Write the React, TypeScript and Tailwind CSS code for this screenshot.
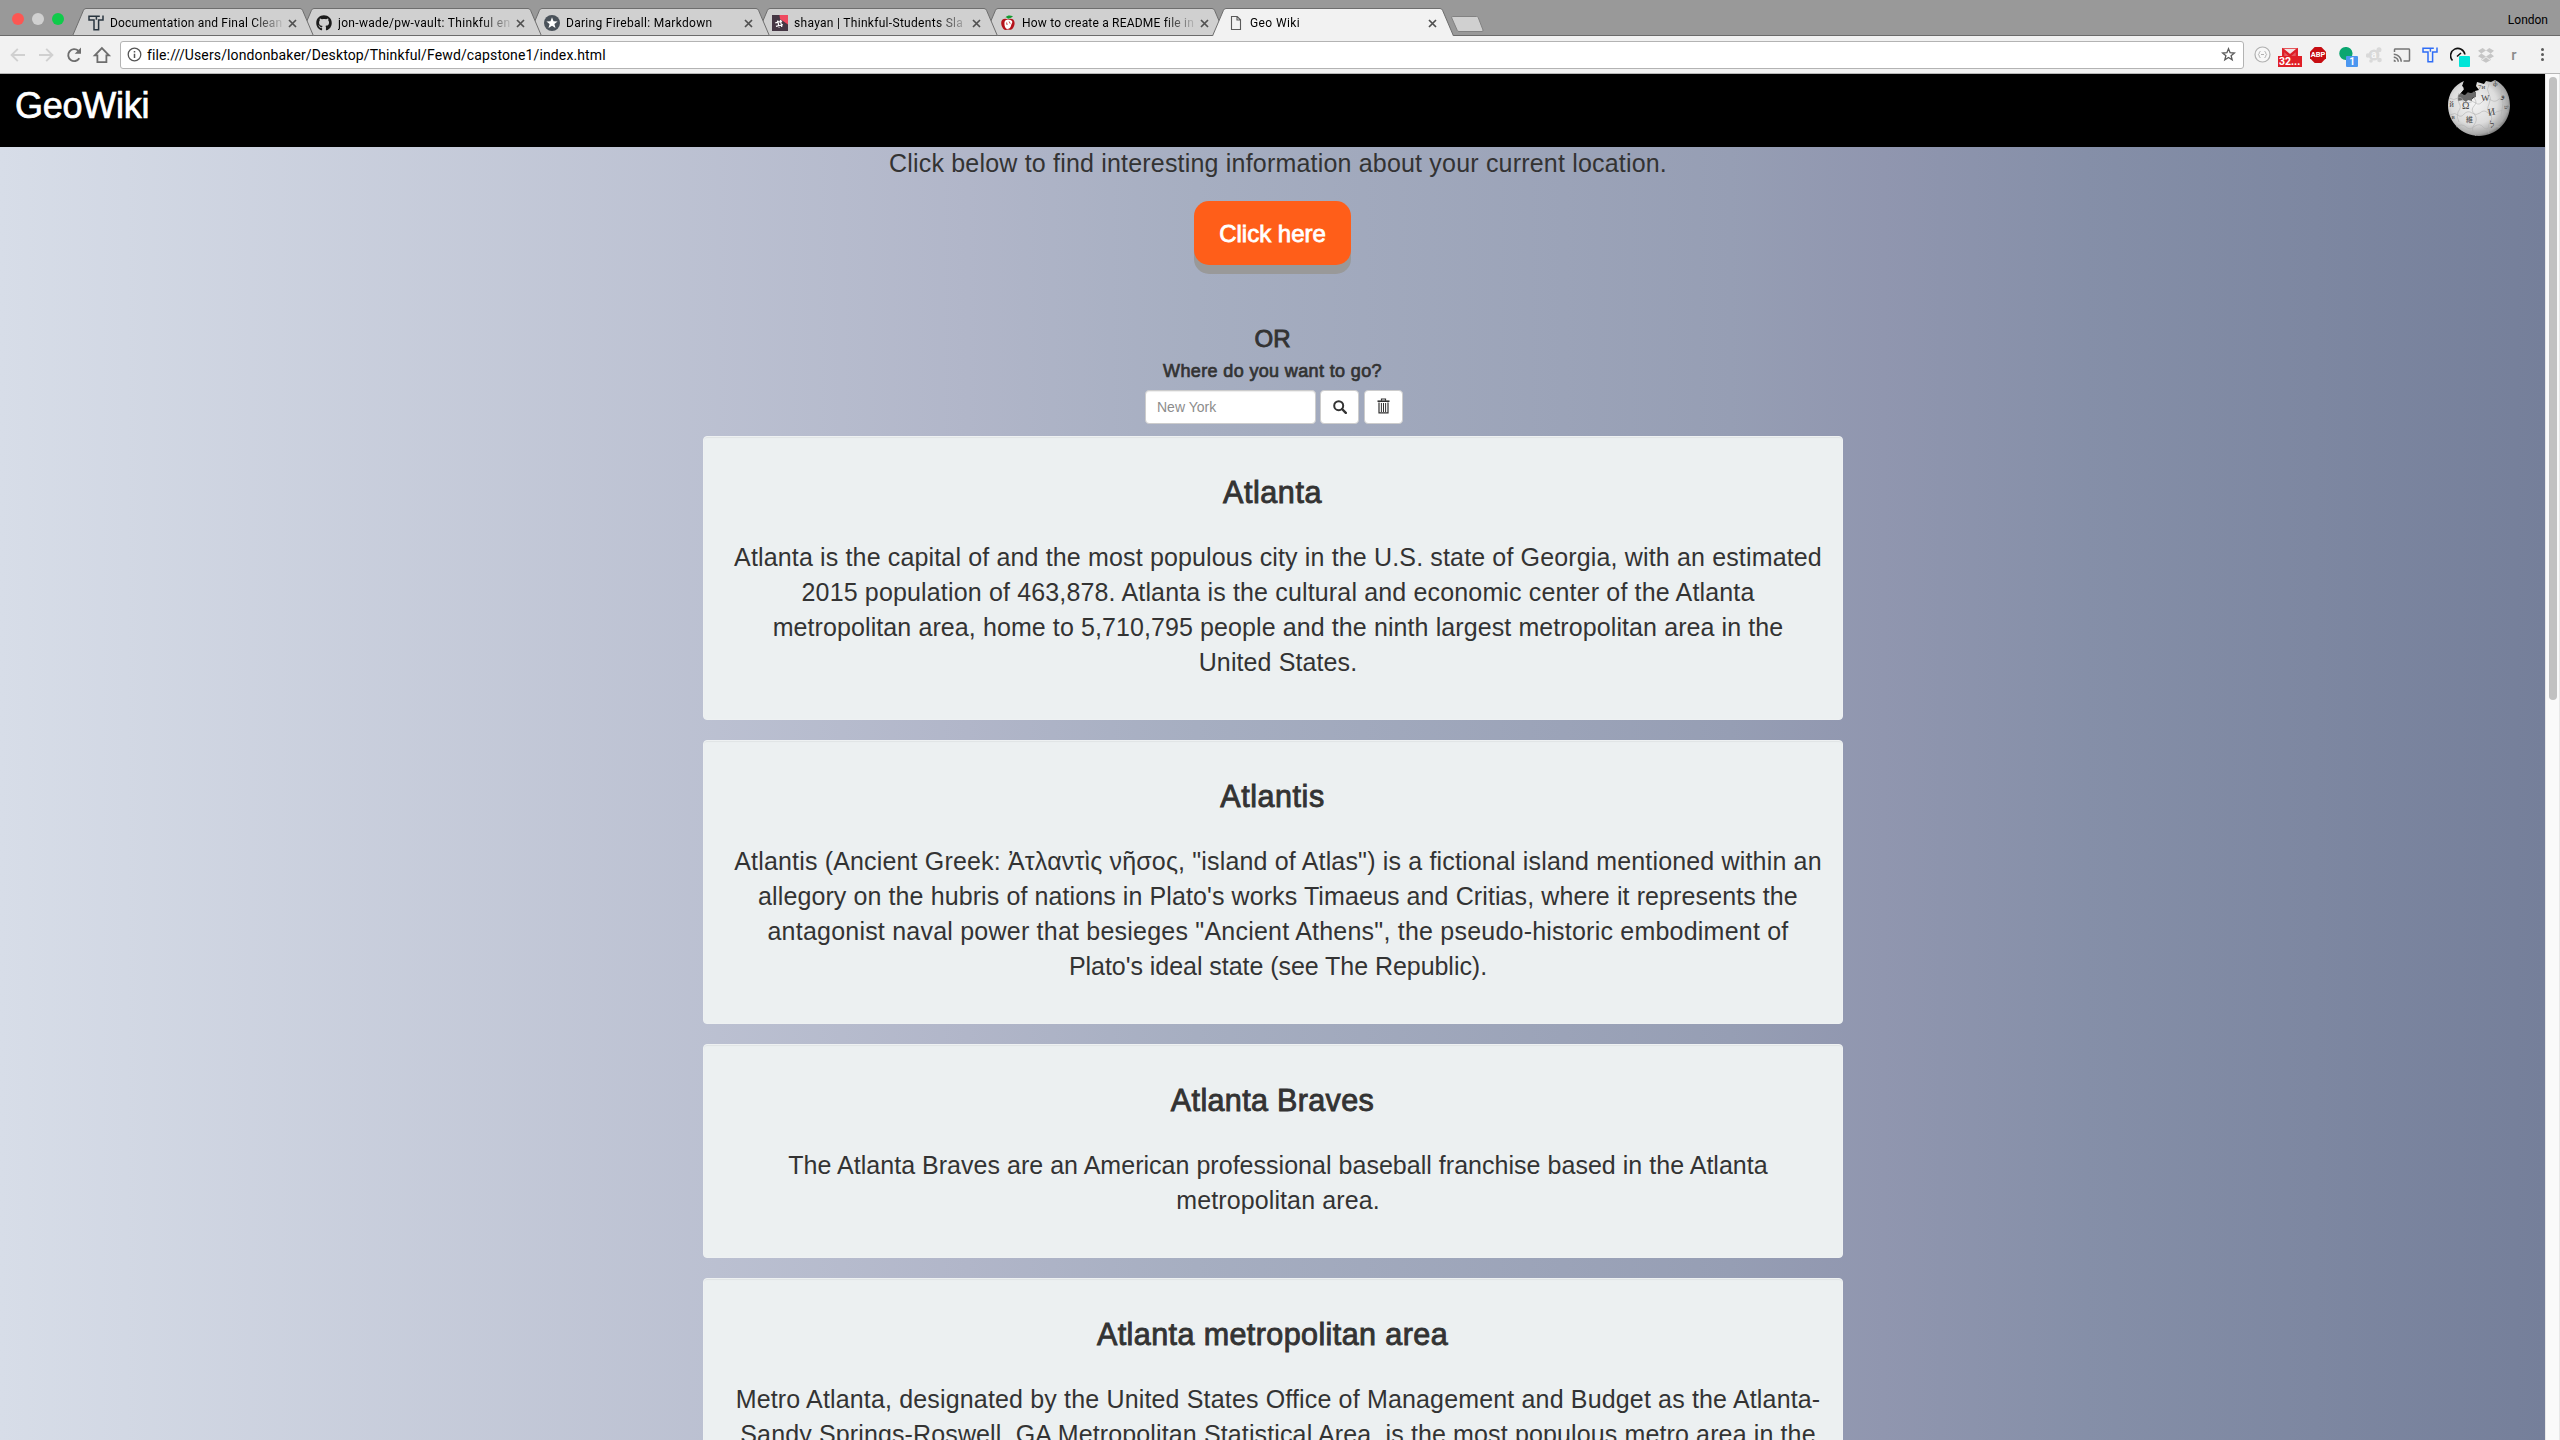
import React from "react";
import { FaGithub } from "react-icons/fa";
import { MdCast } from "react-icons/md";

type Line = { text: string; tracking: string };
type Article = { title: string; titleTracking: string; lines: Line[] };

const articles: Article[] = [
  {
    title: "Atlanta",
    titleTracking: "tracking-[0.58px]",
    lines: [
      { text: "Atlanta is the capital of and the most populous city in the U.S. state of Georgia, with an estimated", tracking: "tracking-[0.15px]" },
      { text: "2015 population of 463,878. Atlanta is the cultural and economic center of the Atlanta", tracking: "tracking-[0.156px]" },
      { text: "metropolitan area, home to 5,710,795 people and the ninth largest metropolitan area in the", tracking: "tracking-[0.096px]" },
      { text: "United States.", tracking: "tracking-[0.11px]" },
    ],
  },
  {
    title: "Atlantis",
    titleTracking: "tracking-[0.55px]",
    lines: [
      { text: "Atlantis (Ancient Greek: Ἀτλαντὶς νῆσος, \"island of Atlas\") is a fictional island mentioned within an", tracking: "tracking-[0.165px]" },
      { text: "allegory on the hubris of nations in Plato's works Timaeus and Critias, where it represents the", tracking: "tracking-[0.1px]" },
      { text: "antagonist naval power that besieges \"Ancient Athens\", the pseudo-historic embodiment of", tracking: "tracking-[0.22px]" },
      { text: "Plato's ideal state (see The Republic).", tracking: "tracking-[-0.045px]" },
    ],
  },
  {
    title: "Atlanta Braves",
    titleTracking: "tracking-[0.35px]",
    lines: [
      { text: "The Atlanta Braves are an American professional baseball franchise based in the Atlanta", tracking: "tracking-[0.028px]" },
      { text: "metropolitan area.", tracking: "tracking-[0.11px]" },
    ],
  },
  {
    title: "Atlanta metropolitan area",
    titleTracking: "tracking-[0.41px]",
    lines: [
      { text: "Metro Atlanta, designated by the United States Office of Management and Budget as the Atlanta-", tracking: "tracking-[0.16px]" },
      { text: "Sandy Springs-Roswell, GA Metropolitan Statistical Area, is the most populous metro area in the", tracking: "tracking-[0.13px]" },
    ],
  },
];

function ThinkfulIcon({ color }: { color: string }) {
  return (
    <svg width="16" height="16" viewBox="0 0 16 16" fill="none" stroke={color} strokeWidth="1.5">
      <path d="M11.800 1.200H1v3.900h5v9.700h4.600V5.100h4.400V.4M8.400 1.200v3.600" />
    </svg>
  );
}

function StarBadge() {
  return (
    <svg width="16" height="16" viewBox="0 0 16 16">
      <circle cx="8" cy="8" r="8" fill="#4a525a" />
      <path d="M8 2.3l1.5 3.9 4.1.2-3.2 2.6 1.1 4L8 10.8 4.5 13l1.1-4-3.2-2.6 4.1-.2z" fill="#fff" />
    </svg>
  );
}

function SlackIcon() {
  return (
    <svg width="16" height="16" viewBox="0 0 16 16">
      <rect width="16" height="16" fill="#453744" />
      <path d="M7.500 0H16v9.500L8 4z" fill="#ef4a60" />
      <path d="M5.600 5.500l1.600 7.200M8.300 4.800l1.500 7.200M3.300 7.800l6.800-1.600M3.900 11.300l7-1.600" stroke="#fff" strokeWidth="1.200" fill="none" />
    </svg>
  );
}

function AppleIcon() {
  return (
    <svg width="16" height="16" viewBox="0 0 16 16">
      <path d="M8 4.600C5 2.600 1 4 1.200 8c.1 3.400 2 6.600 4.200 6.900 1 .1 1.700-.5 2.600-.5s1.700.7 2.700.4C12.900 14.200 14.600 11 14.600 8 14.600 4.200 11 2.800 8 4.600z" fill="#b5121b" />
      <path d="M6.200 5C4.300 5.600 4.300 8 4.600 10.500c.3 2 1.500 3.400 2.800 3.400s3.400-1.100 3.700-3.500c.2-1.700 1.900-2.800.9-4.400-1.100-1.300-3.600-1.700-5.800-1z" fill="#fff" />
      <path d="M9.200 6.500l1 2.200M6.600 7.500l.5 2.500" stroke="#b5121b" strokeWidth=".8" />
      <path d="M5.500 2.200C7.500.2 10 .2 13 1.200 11.500 2.800 9.500 3.400 7.900 3.800 7.500 3 6.700 2.400 5.500 2.200z" fill="#129a2e" />
    </svg>
  );
}

function FileIcon() {
  return (
    <svg width="16" height="16" viewBox="0 0 16 16" fill="none" stroke="#5a5a5a" strokeWidth="1.100">
      <path d="M3.500 1.500h5.700l3.300 3.300v9.700h-9zM9 1.500v3.500h3.500" />
    </svg>
  );
}

const tabs: { title: string; icon: React.ReactNode; z: string; tracking: string; active?: boolean }[] = [
  { title: "Documentation and Final Clean", icon: <ThinkfulIcon color="#29353f" />, z: "z-[6]", tracking: "tracking-[0.2px]" },
  { title: "jon-wade/pw-vault: Thinkful en", icon: <FaGithub size={16} color="#1b1b1b" />, z: "z-[5]", tracking: "tracking-[0.32px]" },
  { title: "Daring Fireball: Markdown", icon: <StarBadge />, z: "z-[4]", tracking: "tracking-[0.3px]" },
  { title: "shayan | Thinkful-Students Sla", icon: <SlackIcon />, z: "z-[3]", tracking: "tracking-[0.3px]" },
  { title: "How to create a README file in", icon: <AppleIcon />, z: "z-[2]", tracking: "tracking-[0.2px]" },
  { title: "Geo Wiki", icon: <FileIcon />, z: "z-[7]", tracking: "tracking-[0.4px]", active: true },
];

function TabStrip() {
  return (
    <div className="flex h-9 shrink-0 bg-[#999999] shadow-[inset_0_-1px_0_#6b6b6b]">
      <div className="flex w-[72px] items-center gap-2 pt-0.5 pl-3">
        <span className="size-3 rounded-full bg-[#fc5753]" />
        <span className="size-3 rounded-full bg-[#d0d0d0]" />
        <span className="size-3 rounded-full bg-[#0fcb4a]" />
      </div>
      <div className="flex pt-2 pr-[11px] pl-[14px]">
        {tabs.map((t) => (
          <div key={t.title} className={`relative -ml-[14px] flex h-7 w-[242px] items-center pl-4 ${t.z}`}>
            <svg className="absolute inset-0 -z-10" width="242" height="28" viewBox="0 0 242 28">
              <path
                d="M.5 28 11.500 2.200Q12.300.5 14 .5H228Q229.700.5 230.500 2.200L241.500 28z"
                fill={t.active ? "#f2f2f2" : "#d0d0d0"}
              />
              <path d="M.5 28 11.500 2.200Q12.300.5 14 .5H228Q229.700.5 230.500 2.200L241.500 28" fill="none" stroke="#6e6e6e" />
              {!t.active && <path d="M1 27.500H241" stroke="#6b6b6b" />}
            </svg>
            <span className="mt-0.5 shrink-0">{t.icon}</span>
            <span
              className={`mt-0.5 ml-1.5 w-[175px] overflow-hidden font-['Roboto',sans-serif] text-[12px] leading-4 whitespace-nowrap text-black [mask-image:linear-gradient(to_right,#000_142px,transparent_176px)] ${t.tracking}`}
            >
              {t.title}
            </span>
            <svg className="mt-0.5 ml-[3px] shrink-0" width="9" height="9" viewBox="0 0 9 9" stroke="#505050" strokeWidth="1.700">
              <path d="M1 1l7 7M8 1l-7 7" />
            </svg>
          </div>
        ))}
      </div>
      <svg className="-ml-[14px] mt-4" width="34" height="17" viewBox="0 0 34 17">
        <path d="M1.300.5H25.500Q26.700.5 27.200 1.500L32 14Q32.400 15.500 31 15.500H8Q6.800 15.500 6.300 14.500L.8 2Q.3.500 1.300.5z" fill="#d0d0d0" stroke="#828282" />
      </svg>
      <div className="flex flex-1 justify-end pt-3 pr-3 font-['Roboto',sans-serif] text-[12px] leading-4 text-black">London</div>
    </div>
  );
}

function ExtensionIcons() {
  return (
    <div className="ml-1 flex items-center font-['Roboto',sans-serif]">
      <div className="flex w-7 justify-center">
        <svg width="17" height="17" viewBox="0 0 17 17">
          <circle cx="8.500" cy="8.500" r="7.500" fill="#f8f8f8" stroke="#b0b0b0" strokeWidth="1.200" />
          <path d="M6.500 5.500q-1.200 0-1.200 1.200t-1 1.800q1 .4 1 1.800t1.200 1.200M10.500 5.500q1.200 0 1.200 1.200t1 1.800q-1 .4-1 1.800t-1.200 1.200M7 8.500h3" fill="none" stroke="#b0b0b0" />
        </svg>
      </div>
      <div className="relative flex w-7 justify-center">
        <svg width="16" height="16" viewBox="0 0 16 16">
          <rect y="1" width="16" height="12" rx="1" fill="#e5585c" />
          <path d="M2 2h12L8 7z" fill="#f0e4e4" />
          <path d="M1.200 13V3L8 8.500 14.800 3v10" fill="none" stroke="#dd1f27" strokeWidth="2.200" />
        </svg>
        <span className="absolute top-[9px] left-0.5 h-[11px] w-6 bg-[#e01f26] pl-px text-[10.5px] leading-[12px] font-bold text-white">32...</span>
      </div>
      <div className="relative flex w-7 justify-center">
        <svg width="16" height="16" viewBox="0 0 16 16">
          <path d="M4.700 0h6.600L16 4.700v6.600L11.300 16H4.700L0 11.300V4.700z" fill="#c70d12" />
        </svg>
        <span className="absolute inset-0 text-center text-[7.5px] leading-4 font-bold text-white">ABP</span>
      </div>
      <div className="relative flex w-7 justify-center">
        <svg width="16" height="16" viewBox="0 0 16 16">
          <path d="M7.500 0a6.500 6.500 0 0 1 1 13l-.5 2.500V13A6.500 6.500 0 0 1 7.500 0z" fill="#0aa670" />
        </svg>
        <span className="absolute top-[9px] left-3.5 h-[11px] w-3 rounded-[1px] bg-[#4c97f0] text-center text-[10px] leading-[12px] font-bold text-white">1</span>
      </div>
      <div className="relative flex w-7 justify-center">
        <svg width="16" height="16" viewBox="0 0 16 16" fill="#d9d9d9">
          <circle cx="8" cy="8" r="5.500" />
          <circle cx="13" cy="2.700" r="2.500" />
          <circle cx="2" cy="8.500" r="2.200" />
          <circle cx="13.500" cy="13" r="2.300" />
          <circle cx="5" cy="14" r="1.800" />
        </svg>
        <span className="absolute inset-0 text-center text-[10px] leading-[15px] font-bold text-[#f6f6f6]">a</span>
      </div>
      <div className="flex w-7 justify-center">
        <MdCast size={18} color="#757575" />
      </div>
      <div className="flex w-7 justify-center">
        <ThinkfulIcon color="#2f6df6" />
      </div>
      <div className="relative flex w-7 justify-center">
        <svg width="16" height="16" viewBox="0 0 16 16" fill="none" stroke="#111" strokeWidth="1.600">
          <path d="M2.500 13.500A7.200 7.200 0 1 1 14.900 7.500M7 9.500l4-3.500" />
        </svg>
        <span className="absolute top-[9px] left-[15px] size-[11px] rounded-[1px] bg-[#00e5d8]" />
      </div>
      <div className="flex w-7 justify-center">
        <svg width="16" height="16" viewBox="0 0 16 16" fill="#c6c6c6">
          <path d="M4.700 1L0 3.800l3.300 2.600L8 3.500zM11.300 1L8 3.500l4.700 2.900L16 3.800zM0 9.200l4.700 2.900L8 9.400 3.300 6.400zM12.700 6.400L8 9.400l3.300 2.700L16 9.200zM8 10.200l-3.300 2.700-1.500-.9v1L8 15.800l4.800-2.800v-1l-1.500.9z" />
        </svg>
      </div>
      <div className="w-7 text-center text-[15px] leading-4 font-medium text-[#8a8a8a]">r</div>
      <div className="flex w-7 flex-col items-center gap-0.5">
        <span className="size-[3px] rounded-full bg-[#5a5a5a]" />
        <span className="size-[3px] rounded-full bg-[#5a5a5a]" />
        <span className="size-[3px] rounded-full bg-[#5a5a5a]" />
      </div>
    </div>
  );
}

function Toolbar() {
  return (
    <div className="flex h-[38px] shrink-0 items-center border-b border-[#b6b6b6] bg-[#f2f2f2] pl-2.5">
      <svg width="102" height="18" viewBox="10 0 102 18" fill="none" strokeWidth="1.900">
        <path d="M25 9H12M17.800 2.800L11.600 9l6.200 6.200" stroke="#d0d0d0" />
        <path d="M39 9h13M46.200 2.800L52.400 9l-6.200 6.200" stroke="#d0d0d0" />
        <path d="M79.300 12.300A6 6 0 1 1 78.300 4.700" stroke="#6e6e6e" />
        <path d="M81 1.500v6.300h-6.300z" fill="#6e6e6e" />
        <path d="M94.800 9.300h2.600v6.800h9V9.300h2.600L101.900 2z" stroke="#6e6e6e" strokeWidth="1.800" />
      </svg>
      <div className="ml-2 flex h-7 w-[2124px] items-center rounded-[3px] border border-[#b3b3b3] bg-white pr-[7px] pl-1.5">
        <svg width="15" height="15" viewBox="0 0 15 15" fill="none" stroke="#555" strokeWidth="1.300">
          <circle cx="7.500" cy="7.500" r="6.300" />
          <path d="M7.500 6.800V11M7.500 4v1.400" strokeWidth="1.500" />
        </svg>
        <span className="ml-[5px] flex-1 font-['Roboto',sans-serif] text-[14px] leading-5 tracking-[0.13px] text-black">
          file:///Users/londonbaker/Desktop/Thinkful/Fewd/capstone1/index.html
        </span>
        <svg width="15" height="15" viewBox="0 0 15 15" fill="none" stroke="#5a5a5a" strokeWidth="1.300">
          <path d="M7.500 1.700l1.600 4 4.300.3-3.300 2.700 1.100 4.200-3.700-2.400-3.700 2.400 1.100-4.200L1.600 6l4.300-.3z" />
        </svg>
      </div>
      <ExtensionIcons />
    </div>
  );
}

function WikiGlobe() {
  return (
    <svg width="64" height="60" viewBox="0 0 64 60">
      <defs>
        <radialGradient id="globe" cx=".42" cy=".42" r=".62">
          <stop offset="0" stopColor="#f4f4f4" />
          <stop offset=".6" stopColor="#dcdcdc" />
          <stop offset=".88" stopColor="#a8a8a8" />
          <stop offset="1" stopColor="#6a6a6a" />
        </radialGradient>
      </defs>
      <path d="M17 3C7 7 1 16 1 27.500 1 44 15 58 32 58S63 44 63 27.500C63 15 56.500 6 48 2l-4 2-5-1-2 3-7-2-1 4 3 4-4 1 1 5-4 3-5-2-4 1-3-4 4-4-1-4z" fill="url(#globe)" />
      <path d="M11 17l4-2 2 2 3-3 4 1 1-2 4 1v5l-4 1v3l-4-1-2 2-3-2-5 1z" fill="#6b6b6b" />
      <path d="M17 3l-2 5 3 2-4 5 4 2 3-3 4 1 4-4-3-4 2-4z" fill="#000" />
      <g fill="none" stroke="#b0b0b0" strokeWidth=".6">
        <path d="M2 20q5 3 9 0 4-2 5 3t5 2q5-3 8 0t7-2q4-4 8-1t8-1q5-3 10 1" />
        <path d="M3 37q5-3 8 0t6-1q4-4 8-1t8 0q4-4 8 0t8-1q5-3 12 0" />
        <path d="M9 49q6-4 10 0t9-1q5-3 8 1t9-1l8 1" />
        <path d="M12 15q-3 6 0 10t-1 9q-2 5 1 10M27 20q4 4 0 8t1 9q3 5-1 10t2 11M42 6q-3 6 0 10t0 10q-3 6 1 10t-1 10q-2 4 0 10M55 10q-2 6 0 10t0 12q-2 5 0 12" />
      </g>
      <g fill="#444" fontFamily="Liberation Serif, serif" fontSize="10">
        <text x="15" y="31">Ω</text>
        <text x="34" y="23" fontSize="9">W</text>
        <text x="41" y="37" transform="rotate(-10 45 34)">И</text>
        <text x="19" y="44" fontFamily="Noto Sans CJK JP, sans-serif" fontSize="7">維</text>
        <text x="43" y="50" fontSize="9">ל</text>
        <text x="2.500" y="29" fontSize="8">й</text>
        <text x="4.500" y="41" fontSize="7">в</text>
        <text x="31" y="11" fontSize="7">7и</text>
        <text x="54" y="20" fontSize="8">و</text>
        <text x="57" y="31" fontSize="6">ש</text>
        <text x="46" y="8" fontSize="7">ф</text>
      </g>
    </svg>
  );
}

function ArticleCard({ article }: { article: Article }) {
  return (
    <article className="w-[1140px] shrink-0 rounded border border-[#eef1f2] bg-[#ecf0f1] pt-[39px] pb-[39px] pl-[11px] text-center text-[#333] shadow-[inset_0_1px_1px_rgba(0,0,0,0.05)]">
      <h3 className={`mr-[11px] text-[30.5px] leading-[33px] [-webkit-text-stroke:0.9px_#333] ${article.titleTracking}`}>{article.title}</h3>
      <div className="mt-[31px] text-[25px] leading-[35px] whitespace-nowrap">
        {article.lines.map((l) => (
          <p key={l.text} className={l.tracking}>{l.text}</p>
        ))}
      </div>
    </article>
  );
}

function Page() {
  return (
    <div className="flex h-[1366px] w-[2545px] flex-col items-center overflow-hidden bg-[linear-gradient(to_right,#d7dde8_0%,#b1b6c9_38%,#a6aec1_47%,#969eb4_68%,#9096af_74%,#858fa8_82%,#757f9a_100%)] font-['Liberation_Sans',Arial,sans-serif] text-[#333]">
      <header className="flex h-[73px] w-full shrink-0 justify-between bg-black pr-[34px] pl-[15px]">
        <h1 className="pt-3 text-[36px] leading-10 tracking-[-0.25px] text-white [-webkit-text-stroke:0.7px_#fff]">GeoWiki</h1>
        <div className="pt-1">
          <WikiGlobe />
        </div>
      </header>
      <p className="-mt-px shrink-0 pl-[11px] text-[25px] leading-[35px] tracking-[0.19px]">
        Click below to find interesting information about your current location.
      </p>
      <button className="mt-5 h-16 w-[157px] shrink-0 rounded-[15px] bg-[#ff5e19] text-center text-[24px] leading-[65px] text-white shadow-[0_9px_0_#999999] [-webkit-text-stroke:0.8px_#fff]">
        Click here
      </button>
      <p className="mt-[60px] shrink-0 text-[24px] leading-[27px] [-webkit-text-stroke:0.9px_#333]">OR</p>
      <p className="mt-[9px] shrink-0 text-[18px] leading-5 tracking-[0.36px] [-webkit-text-stroke:0.7px_#333]">Where do you want to go?</p>
      <div className="mt-[9px] flex shrink-0 gap-1 pl-[3px]">
        <div className="flex h-[34px] w-[171px] items-center rounded border border-[#ccc] bg-white px-[11px] text-[14px] text-[#8c8c8c] shadow-[inset_0_1px_1px_rgba(0,0,0,0.075)]">
          New York
        </div>
        <button className="flex h-[34px] w-[39px] items-center justify-center rounded border border-[#ccc] bg-white pb-px">
          <svg width="14" height="14" viewBox="0 0 14 14" fill="none" stroke="#333">
            <circle cx="5.700" cy="5.700" r="4.500" strokeWidth="2" />
            <path d="M9 9l3.800 3.800" strokeWidth="2.400" strokeLinecap="round" />
          </svg>
        </button>
        <button className="ml-px flex h-[34px] w-[39px] items-center justify-center rounded border border-[#ccc] bg-white pb-0.5">
          <svg width="13" height="16" viewBox="0 0 13 16" fill="none" stroke="#333">
            <path d="M.5 3.200h12" strokeWidth="1.600" />
            <path d="M4.500 2.800V1h4v1.800M2 4.500v10.300h9V4.500" strokeWidth="1.200" />
            <path d="M4.400 5v9M6.500 5v9M8.600 5v9" strokeWidth="1" />
          </svg>
        </button>
      </div>
      <main className="mt-3 flex shrink-0 flex-col gap-5">
        {articles.map((a) => (
          <ArticleCard key={a.title} article={a} />
        ))}
      </main>
    </div>
  );
}

export default function App() {
  return (
    <div className="flex h-[1440px] w-[2560px] flex-col overflow-hidden">
      <TabStrip />
      <Toolbar />
      <div className="flex flex-1">
        <Page />
        <div className="w-[15px] border-x border-[#e8e8e8] bg-[#fafafa] pt-[3px] pl-[3px]">
          <div className="h-[623px] w-2 rounded-full bg-[#c1c1c1]" />
        </div>
      </div>
    </div>
  );
}
